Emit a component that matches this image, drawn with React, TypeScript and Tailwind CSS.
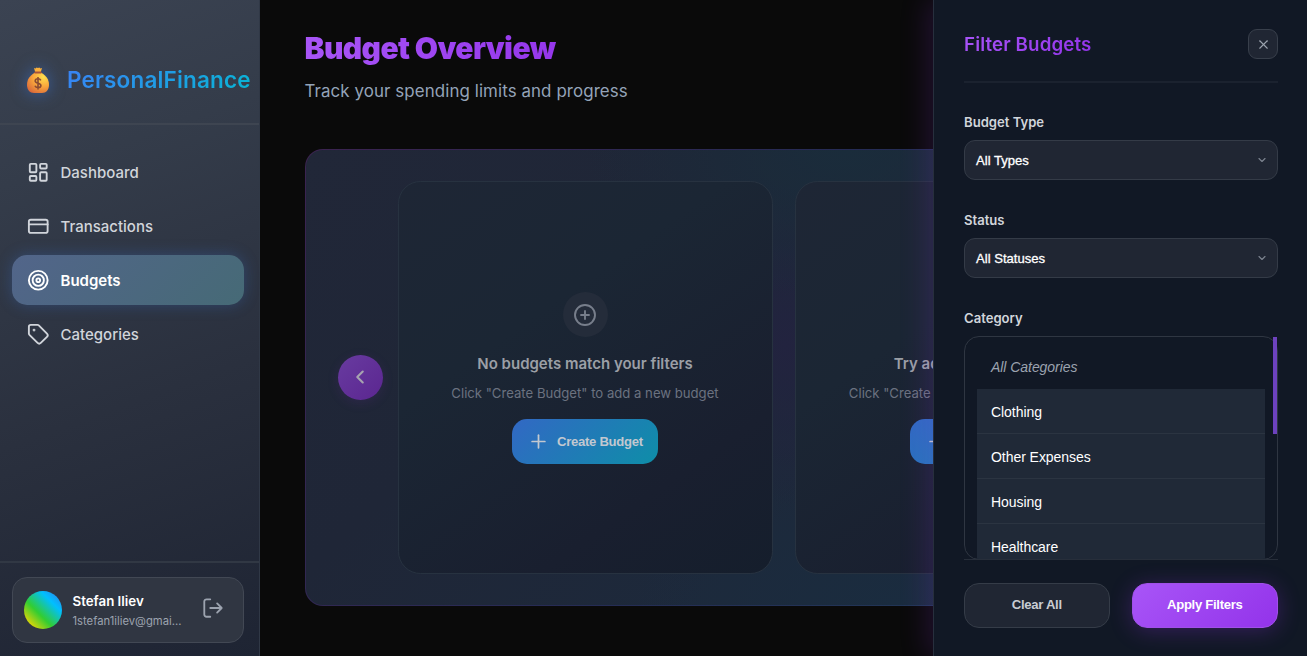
import type { ReactNode } from "react";
import { ChevronLeft, ChevronDown, CirclePlus, CreditCard, LayoutDashboard, Plus, Tag, Target, X } from "lucide-react";

function MoneyBag() {
  return (
    <svg viewBox="0 0 24 28" className="h-[28px] w-[24px] drop-shadow-[0_0_8px_rgba(59,130,246,0.5)]">
      <defs>
        <radialGradient id="bag" cx="0.75" cy="0.2" r="0.95">
          <stop offset="0" stopColor="#ffe04d" />
          <stop offset="0.5" stopColor="#f9a63c" />
          <stop offset="1" stopColor="#d8673a" />
        </radialGradient>
      </defs>
      <path d="M8 2 9.600 2.600 10.600 1.400 12 1.900 13.400 1.400 14.400 2.600 16 2 14.800 6H9.200Z" fill="#fbb03b" />
      <path d="M8.300 7h7.400C20 9.500 23 13.500 23 18.500c0 5.500-2.700 8.500-7 8.500H8c-4.300 0-7-3-7-8.500C1 13.500 4 9.500 8.300 7Z" fill="url(#bag)" />
      <rect x="8.200" y="5.400" width="7.600" height="2" rx="1" fill="#a5543c" />
      <path d="M14.800 14.300c-.5-1-1.500-1.500-2.800-1.500-1.600 0-2.800.8-2.800 2.100 0 3 5.700 1.500 5.700 4.500 0 1.400-1.300 2.200-2.900 2.200-1.500 0-2.600-.6-3-1.800M12 11v12.500" fill="none" stroke="#8a4b32" strokeWidth="1.600" />
    </svg>
  );
}

function NavItem({ icon, label, active = false }: { icon: ReactNode; label: string; active?: boolean }) {
  return (
    <div
      className={
        active
          ? "flex h-[50px] items-center gap-[11px] rounded-[15px] bg-linear-[135deg,#52658a,#466a76] pl-[15px] text-white shadow-[0_0_15px_rgba(59,130,246,0.25)]"
          : "flex h-[50px] items-center gap-[11px] rounded-[15px] pl-[15px] text-[#d1d5db]"
      }
    >
      {icon}
      <span className={active ? "pt-0.5 text-[15px] font-semibold" : "pt-0.5 text-[15px] font-medium"}>{label}</span>
    </div>
  );
}

function Sidebar() {
  return (
    <aside className="flex w-[260px] shrink-0 flex-col border-r border-[#303846] bg-linear-[160deg,#3b4352_0%,#343c4a_25%,#2a303e_60%,#1e2433_100%]">
      <div className="flex h-[125px] items-center gap-[17px] border-b-2 border-[#3e4551] pt-[37px] pl-[26px]">
        <MoneyBag />
        <span className="bg-linear-[135deg,#3b82f6,#06b6d4] bg-clip-text text-[22.500px] font-semibold tracking-[0.170px] whitespace-nowrap text-transparent">
          PersonalFinance
        </span>
      </div>
      <nav className="flex flex-1 flex-col gap-1 pt-[22px] pr-[15px] pl-3">
        <NavItem icon={<LayoutDashboard className="size-[22.500px]" strokeWidth={2} />} label="Dashboard" />
        <NavItem icon={<CreditCard className="size-[22.500px]" strokeWidth={2} />} label="Transactions" />
        <NavItem active icon={<Target className="size-[22.500px]" strokeWidth={2} />} label="Budgets" />
        <NavItem icon={<Tag className="size-[22.500px]" strokeWidth={2} />} label="Categories" />
      </nav>
      <div className="h-[95px] border-t-2 border-[#313844] pt-[14px] pr-[15px] pl-3">
        <div className="flex h-[66px] items-center rounded-[15px] border border-[#424854] bg-[#303642] pl-[11px]">
          <div className="size-[37.500px] shrink-0 rounded-full bg-[linear-gradient(45deg,#ffd700_8%,#32cd32_40%,#00bfff_72%,#4169e1_105%)]" />
          <div className="ml-[11px] w-[110px] pt-0.5 leading-none">
            <div className="text-[13.300px] font-semibold text-white">Stefan Iliev</div>
            <div className="mt-[7px] text-[11.250px] whitespace-nowrap text-[#9ca3af]">1stefan1iliev@gmai...</div>
          </div>
          <svg viewBox="0 0 24 24" className="mb-[4px] ml-[19px] size-[22px]" fill="none" stroke="#9ca3af" strokeWidth="2" strokeLinecap="round" strokeLinejoin="round">
            <path d="M9 2.500H5a2.500 2.500 0 0 0-2.500 2.500v14A2.500 2.500 0 0 0 5 21.500h4M9 12h12.500M16.500 7l5 5-5 5" />
          </svg>
        </div>
      </div>
    </aside>
  );
}

function EmptyCard({ title }: { title: string }) {
  return (
    <div className="flex w-[375px] shrink-0 flex-col items-center justify-center rounded-[22.500px] border border-[#273240] bg-linear-[145deg,#1e2635_0%,#1b2634_35%,#191f2f_75%,#151e2c_100%] pt-0.5">
      <div className="flex size-[45px] items-center justify-center rounded-full bg-[#242c3a] text-[#777e8b]">
        <CirclePlus className="size-[24px]" strokeWidth={1.9} />
      </div>
      <div className="mt-[15px] text-[15px] leading-6 font-semibold whitespace-nowrap text-[#9b9fa6]">{title}</div>
      <div className="mt-[7px] text-[13.150px] leading-5 whitespace-nowrap text-[#6b7280]">Click "Create Budget" to add a new budget</div>
      <button className="mt-4 flex h-[45px] w-[146px] items-center gap-[9px] rounded-[15px] bg-linear-[135deg,#3268c4,#0e8ea8] pl-[17px] font-['Liberation_Sans',sans-serif] text-[13.100px] font-bold tracking-[-0.280px] whitespace-nowrap text-[#c2c8d0]">
        <Plus className="size-[19px] scale-115" strokeWidth={1.9} />
        Create Budget
      </button>
    </div>
  );
}

function Overview() {
  return (
    <main className="w-[673px] shrink-0 overflow-hidden pt-[30px] pl-[44.500px]">
      <h1 className="w-[1000px] bg-linear-[90deg,#a855f7_0%,#9333ea_28%] bg-clip-text text-[30px] leading-9 font-black tracking-[-0.600px] text-transparent">
        Budget Overview
      </h1>
      <p className="mt-[13px] text-[16.900px] leading-6 tracking-[0.090px] text-[#94a3b8]">Track your spending limits and progress</p>
      <section className="mt-[46.400px] flex h-[456.200px] w-[960px] rounded-[18px] bg-linear-[120deg,#3b2350,#252c55_45%,#1d4058] p-px">
        <div className="flex flex-1 gap-[15px] rounded-[17px] bg-[radial-gradient(ellipse_260px_150px_at_540px_0px,#1a2c3b,transparent),radial-gradient(ellipse_120px_160px_at_480px_195px,#22233f,transparent),radial-gradient(ellipse_260px_130px_at_590px_455px,#1a2c3f,transparent),linear-gradient(135deg,#212738_0%,#1f2637_30%,#1d293b_60%)] py-[31px] pl-8">
          <button className="flex size-[45px] shrink-0 items-center justify-center self-center rounded-full bg-linear-[135deg,#683ba0,#5b2690] text-[#a7a3b0] shadow-[0_3px_12px_rgba(120,50,180,0.15)]">
            <ChevronLeft className="size-[22px]" strokeWidth={2.3} />
          </button>
          <div className="flex gap-[22.500px]">
            <EmptyCard title="No budgets match your filters" />
            <EmptyCard title="Try adjusting your filters" />
          </div>
        </div>
      </section>
    </main>
  );
}

function SelectField({ label, value }: { label: string; value: string }) {
  return (
    <div className="mb-[30px]">
      <div className="text-[13.100px] leading-5 font-semibold text-[#d1d5db]">{label}</div>
      <div className="mt-2 flex h-10 items-center justify-between rounded-[11px] border border-[#343b47] bg-[#202633] pr-[9px] pl-[11px] font-['Liberation_Sans',sans-serif] text-[13.100px] text-white">
        <span className="pt-0.5 [-webkit-text-stroke:0.3px_white]">{value}</span>
        <ChevronDown className="size-3 text-[#7b828e]" strokeWidth={2.300} />
      </div>
    </div>
  );
}

const categories = ["Clothing", "Other Expenses", "Housing", "Healthcare"];

function FilterPanel() {
  return (
    <aside className="relative flex h-[656px] w-[374px] shrink-0 flex-col border-l border-[#272f3d] bg-[#111825] pr-[29px] pl-[30px] shadow-[-6px_0_26px_rgba(147,51,234,0.17)]">
      <div className="flex h-[83px] shrink-0 items-center justify-between border-b-2 border-[#1b222f] pt-[7px]">
        <h2 className="bg-linear-[135deg,#a855f7,#9333ea] bg-clip-text pt-0.5 text-[18.750px] font-semibold tracking-[0.110px] text-transparent">Filter Budgets</h2>
        <button className="flex size-[30px] items-center justify-center rounded-[9px] border border-[#383f4b] bg-[#202633] text-[#9ca3af]">
          <X className="size-[15px]" strokeWidth={1.700} />
        </button>
      </div>
      <div className="h-[476px] overflow-hidden pt-[29px]">
        <SelectField label="Budget Type" value="All Types" />
        <SelectField label="Status" value="All Statuses" />
        <div className="text-[13.100px] leading-5 font-semibold text-[#d1d5db]">Category</div>
        <div className="relative mt-2">
          <div className="h-[224px] overflow-hidden rounded-[15px] border-[1.500px] border-[#2f3642] pl-[11.500px] font-['Liberation_Sans',sans-serif] text-[14px] tracking-[-0.050px]">
            <div className="w-[288px] pt-[7px]">
              <div className="flex h-[45px] items-center pt-px pl-[14.500px] text-[#9ca3af] italic">All Categories</div>
              {categories.map((name) => (
                <div key={name} className="flex h-[45px] items-center border-b border-[#2b3441] bg-[#202937] pt-[3px] pl-[14.500px] text-white">
                  {name}
                </div>
              ))}
            </div>
          </div>
          <div className="absolute top-px right-px h-[97px] w-1 bg-[#6d42be]" />
        </div>
      </div>
      <div className="flex gap-[22px] border-t border-[#272e3a] pt-[23px] font-['Liberation_Sans',sans-serif] text-[13.100px] font-bold tracking-[-0.300px]">
        <button className="h-[45px] w-[146px] rounded-[15px] border border-[#353c48] bg-[#202633] pb-0.5 text-[#c9cdd3]">Clear All</button>
        <button className="h-[45px] w-[147px] rounded-[15px] border border-[#a050e8] bg-linear-[135deg,#a855f7,#9333ea] pb-0.5 text-white shadow-[0_3px_22px_rgba(147,51,234,0.28)]">
          Apply Filters
        </button>
      </div>
    </aside>
  );
}

export default function App() {
  return (
    <div className="flex h-[656px] w-[1307px] overflow-hidden bg-[#0a0a0a] font-[Inter,sans-serif]">
      <Sidebar />
      <Overview />
      <FilterPanel />
    </div>
  );
}
